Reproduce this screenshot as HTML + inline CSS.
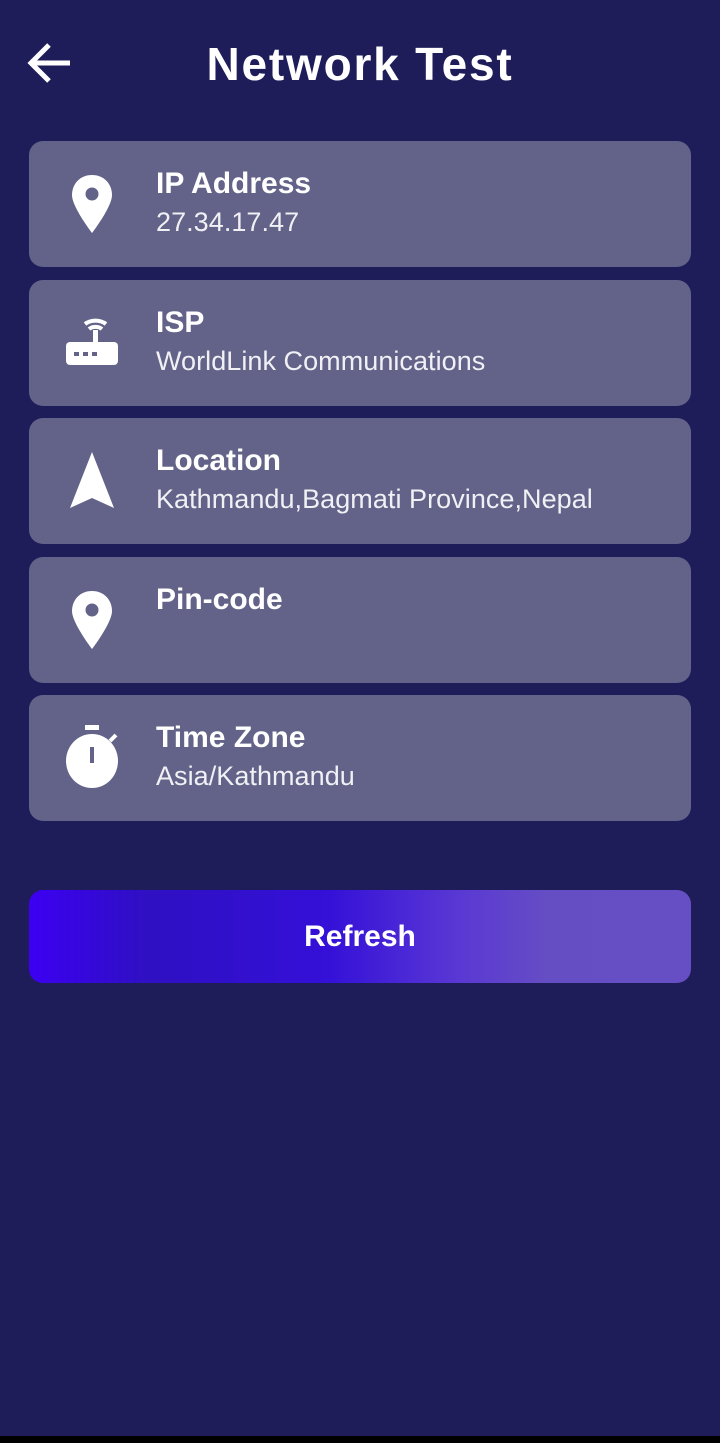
<!DOCTYPE html>
<html><head><style>
body{margin:0;width:720px;height:1443px;background:#1f1d59;font-family:"Liberation Sans",sans-serif;color:#fff;position:relative;overflow:hidden}
.title{position:absolute;left:0;width:720px;top:37px;text-align:center;font-size:46px;font-weight:bold;letter-spacing:1.8px}
.card{position:absolute;left:29px;width:662px;height:126px;background:#636389;border-radius:14px}
.t{position:absolute;left:127px;top:26px;font-size:30px;font-weight:bold}
.s{position:absolute;left:127px;top:66px;font-size:27px;font-weight:300;color:#f0f0f5;letter-spacing:0.05px}
.ic{position:absolute;left:34px;top:30px;width:58px;height:66px}
.btn{position:absolute;left:29px;top:890px;width:662px;height:93px;border-radius:14px;background:linear-gradient(90deg,#3c00f2 0%,#2f10c2 18%,#3410d8 45%,#5a38d4 65%,#654dc4 78%,#664ec4 100%);text-align:center;line-height:93px;font-size:30px;font-weight:bold}
.bar{position:absolute;left:0;top:1436px;width:720px;height:7px;background:#000}
</style></head><body>
<svg style="position:absolute;left:26px;top:40px" width="48" height="46" viewBox="0 0 48 46"><path d="M44 23H6M23 5L5 23l18 18" stroke="#fff" stroke-width="5" fill="none"/></svg>
<div class="title">Network Test</div>

<div class="card" style="top:141px"><svg class="ic" viewBox="0 0 58 66"><path d="M29 4C17 4 9 13 9 24c0 12 20 38 20 38s20-26 20-38C49 13 41 4 29 4z" fill="#fff"/><circle cx="29" cy="23" r="6.5" fill="#636389"/></svg><div class="t">IP Address</div><div class="s">27.34.17.47</div></div>

<div class="card" style="top:280px"><svg class="ic" viewBox="0 0 58 66"><rect x="3" y="32" width="52" height="23" rx="4" fill="#fff"/><rect x="30" y="20" width="5" height="14" fill="#fff"/><path d="M22 14a15 12 0 0 1 21 0M26 19a9 7 0 0 1 13 0" stroke="#fff" stroke-width="4" fill="none"/><rect x="11" y="42" width="5" height="4" fill="#636389"/><rect x="20" y="42" width="5" height="4" fill="#636389"/><rect x="29" y="42" width="5" height="4" fill="#636389"/></svg><div class="t">ISP</div><div class="s">WorldLink Communications</div></div>

<div class="card" style="top:418px"><svg class="ic" viewBox="0 0 58 66"><path d="M29 4L51 60 29 50 7 60z" fill="#fff"/></svg><div class="t">Location</div><div class="s">Kathmandu,Bagmati Province,Nepal</div></div>

<div class="card" style="top:557px"><svg class="ic" viewBox="0 0 58 66"><path d="M29 4C17 4 9 13 9 24c0 12 20 38 20 38s20-26 20-38C49 13 41 4 29 4z" fill="#fff"/><circle cx="29" cy="23" r="6.5" fill="#636389"/></svg><div class="t">Pin-code</div></div>

<div class="card" style="top:695px"><svg class="ic" viewBox="0 0 58 66"><rect x="22" y="0" width="14" height="5" fill="#fff"/><ellipse cx="29" cy="36" rx="26" ry="27" fill="#fff"/><path d="M47 16l6-6" stroke="#fff" stroke-width="4"/><rect x="27" y="22" width="4" height="16" fill="#636389"/></svg><div class="t">Time Zone</div><div class="s">Asia/Kathmandu</div></div>

<div class="btn">Refresh</div>
<div class="bar"></div>
</body></html>
